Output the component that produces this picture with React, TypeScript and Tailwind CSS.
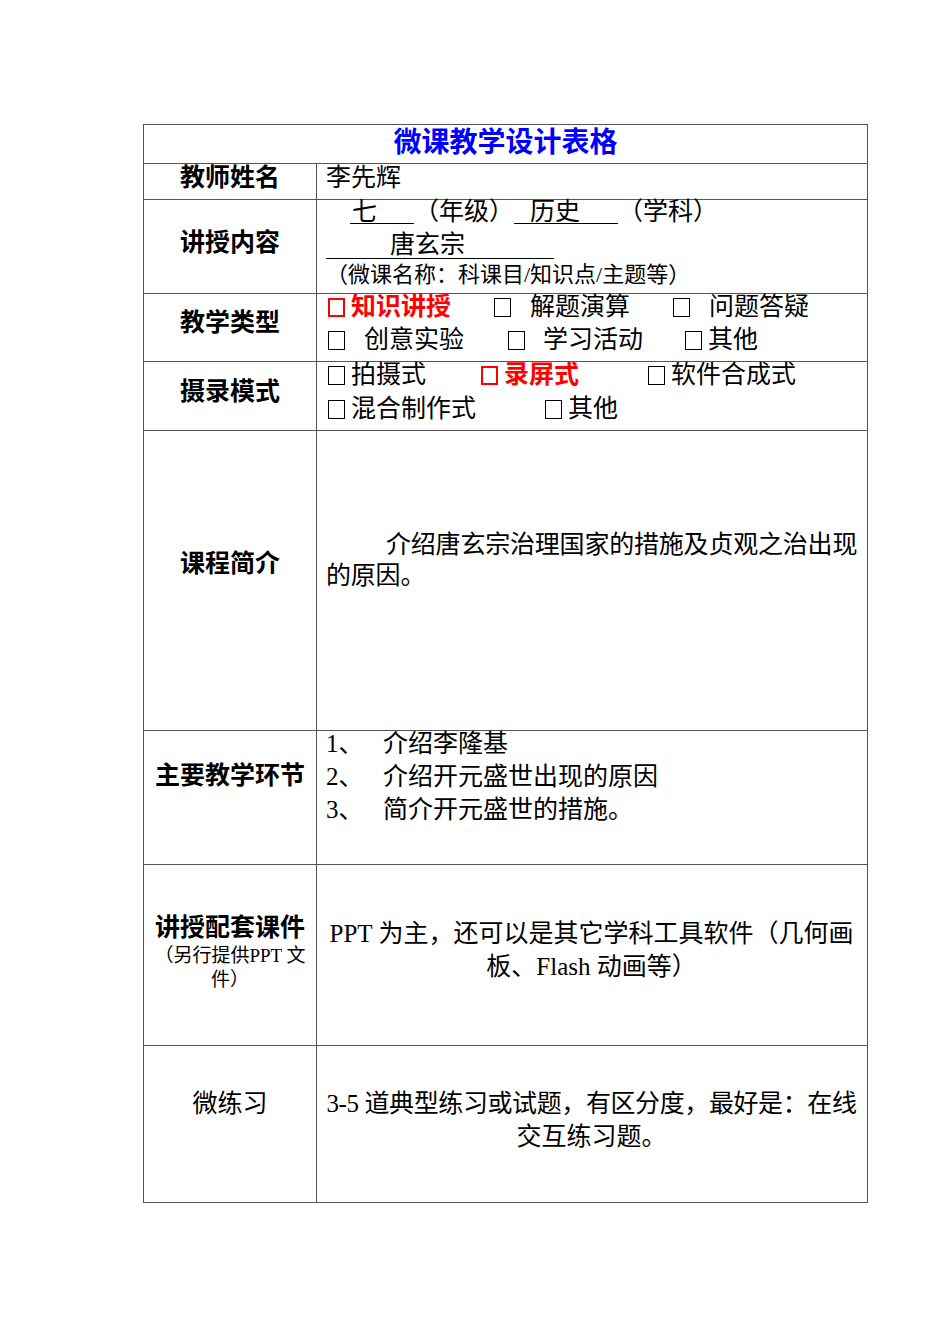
import type { ReactNode } from 'react';

// 复选框（空心方块）
const Box = ({ red }: { red?: boolean }) => (
  <span
    className={
      red
        ? 'inline-block shrink-0 w-[17px] h-[19px] border-2 border-[#ff0000]'
        : 'inline-block shrink-0 w-[17px] h-[19px] border border-black'
    }
  />
);

type ItemProps = {
  w?: string;
  gap: string;
  red?: boolean;
  children: ReactNode;
};

const Item = ({ w = '', gap, red, children }: ItemProps) => (
  <span className={`flex items-center shrink-0 ${w}`}>
    <Box red={red} />
    <span className={red ? `${gap} text-[#ff0000] font-bold` : gap}>{children}</span>
  </span>
);

const Label = ({ children, pb }: { children: ReactNode; pb: string }) => (
  <div
    className={`w-[173px] shrink-0 border-r border-[#555] flex flex-col items-center justify-center font-bold text-[25px] ${pb}`}
  >
    {children}
  </div>
);

export default function App() {
  return (
    <div className="w-[950px] h-[1344px] bg-white text-black font-['Liberation_Serif','Noto_Sans_CJK_SC',serif] pt-[124px] pl-[143px]">
      <div className="w-[725px] border border-[#555] flex flex-col">
        {/* 标题 */}
        <div className="h-[39px] border-b border-[#555] flex items-center justify-center pb-[9px]">
          <span className="text-[28px] leading-[30px] font-bold text-[#0000ff] font-['Noto_Sans_CJK_SC',sans-serif]">
            微课教学设计表格
          </span>
        </div>

        {/* 教师姓名 */}
        <div className="h-[36px] border-b border-[#555] flex">
          <Label pb="pb-[7px]">教师姓名</Label>
          <div className="flex-1 pl-[9px] text-[25px] leading-[28px]">李先辉</div>
        </div>

        {/* 讲授内容 */}
        <div className="h-[94px] border-b border-[#555] flex">
          <Label pb="pb-[7px]">讲授内容</Label>
          <div className="flex-1 pl-[9px] text-[25px]">
            <div className="flex h-[24px] leading-[24px] pl-[24px]">
              <span className="w-[64px] h-[24px] pl-[2px] border-b border-black shrink-0">七</span>
              <span className="shrink-0">（年级）</span>
              <span className="w-[104px] h-[24px] pl-[16px] border-b border-black shrink-0">历史</span>
              <span className="shrink-0">（学科）</span>
            </div>
            <div className="mt-[5px] h-[32px] leading-[32px]">
              <span className="inline-block w-[228px] h-[28px] leading-[28px] pl-[64px] border-b border-black">唐玄宗</span>
            </div>
            <div className="h-[28px] leading-[28px] text-[22px] whitespace-nowrap">（微课名称：科课目/知识点/主题等）</div>
          </div>
        </div>

        {/* 教学类型 */}
        <div className="h-[68px] border-b border-[#555] flex">
          <Label pb="pb-[9px]">教学类型</Label>
          <div className="flex-1 pl-[11px] text-[25px] leading-[26px] flex flex-col gap-[7px] whitespace-nowrap">
            <div className="flex">
              <Item w="w-[166px]" gap="ml-[6px]" red>知识讲授</Item>
              <Item w="w-[179px]" gap="ml-[19px]">解题演算</Item>
              <Item gap="ml-[19px]">问题答疑</Item>
            </div>
            <div className="flex">
              <Item w="w-[180px]" gap="ml-[19px]">创意实验</Item>
              <Item w="w-[177px]" gap="ml-[18px]">学习活动</Item>
              <Item gap="ml-[6px]">其他</Item>
            </div>
          </div>
        </div>

        {/* 摄录模式 */}
        <div className="h-[69px] border-b border-[#555] flex">
          <Label pb="pb-[8px]">摄录模式</Label>
          <div className="flex-1 pl-[11px] text-[25px] leading-[26px] flex flex-col gap-[8px] whitespace-nowrap">
            <div className="flex">
              <Item w="w-[153px]" gap="ml-[6px]">拍摄式</Item>
              <Item w="w-[167px]" gap="ml-[6px]" red>录屏式</Item>
              <Item gap="ml-[6px]">软件合成式</Item>
            </div>
            <div className="flex">
              <Item w="w-[217px]" gap="ml-[6px]">混合制作式</Item>
              <Item gap="ml-[6px]">其他</Item>
            </div>
          </div>
        </div>

        {/* 课程简介 */}
        <div className="h-[300px] border-b border-[#555] flex">
          <Label pb="pb-[34px]">课程简介</Label>
          <div className="flex-1 pl-[9px] pt-[98px] text-[25px] leading-[31px]">
            <p className="indent-[60px] whitespace-nowrap tracking-[-0.2px]">
              介绍唐玄宗治理国家的措施及贞观之治出现
              <br />
              的原因。
            </p>
          </div>
        </div>

        {/* 主要教学环节 */}
        <div className="h-[134px] border-b border-[#555] flex">
          <Label pb="pb-[43px]">主要教学环节</Label>
          <div className="flex-1 pl-[9px] text-[25px] leading-[26px] flex flex-col gap-[7px] whitespace-nowrap">
            <div className="flex">
              <span className="w-[57px] shrink-0">1、</span>
              <span>介绍李隆基</span>
            </div>
            <div className="flex">
              <span className="w-[57px] shrink-0">2、</span>
              <span>介绍开元盛世出现的原因</span>
            </div>
            <div className="flex">
              <span className="w-[57px] shrink-0">3、</span>
              <span>简介开元盛世的措施。</span>
            </div>
          </div>
        </div>

        {/* 讲授配套课件 */}
        <div className="h-[181px] border-b border-[#555] flex">
          <Label pb="pb-[6px]">
            <span className="leading-[30px]">讲授配套课件</span>
            <span className="font-normal text-[19px] leading-[24px] mt-[1px] text-center whitespace-nowrap">
              （另行提供PPT 文
              <br />
              件）
            </span>
          </Label>
          <div className="flex-1 pl-[9px] pr-[10px] flex flex-col justify-center pb-[10px] text-[25px] leading-[33px] text-center whitespace-nowrap">
            <div>PPT 为主，还可以是其它学科工具软件（几何画</div>
            <div>板、Flash 动画等）</div>
          </div>
        </div>

        {/* 微练习 */}
        <div className="h-[156px] flex">
          <div className="w-[173px] shrink-0 border-r border-[#555] flex items-center justify-center pb-[40px] text-[25px]">
            微练习
          </div>
          <div className="flex-1 pl-[9px] pr-[10px] flex flex-col justify-center pb-[9px] text-[25px] leading-[33px] text-center whitespace-nowrap">
            <div className="tracking-[-0.4px]">3-5 道典型练习或试题，有区分度，最好是：在线</div>
            <div>交互练习题。</div>
          </div>
        </div>
      </div>
    </div>
  );
}
